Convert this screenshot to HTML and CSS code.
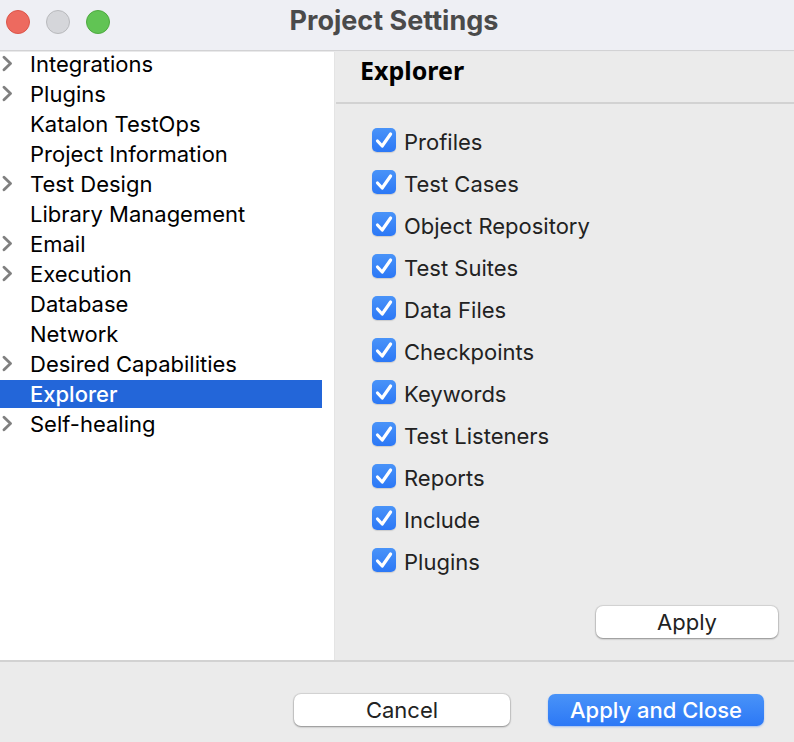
FILE: index.html
```
<!DOCTYPE html>
<html lang="en">
<head>
<meta charset="utf-8">
<meta name="viewport" content="width=device-width, initial-scale=1">
<title>Project Settings</title>
<link rel="stylesheet" href="styles.css">
</head>
<body>
<svg class="symbols" aria-hidden="true">
  <symbol id="chevron" viewBox="0 0 12 18"><path d="M4 2.200L10.500 8.500L4 14.800" fill="none" stroke="#808080" stroke-width="2.800" stroke-linecap="round" stroke-linejoin="round"/></symbol>
  <symbol id="check" viewBox="0 0 24 24"><path d="M5.500 13L10.200 18L18.600 6" fill="none" stroke="#fff" stroke-width="3.200" stroke-linecap="round" stroke-linejoin="round"/></symbol>
</svg>
<header class="titlebar">
  <div class="lights">
    <button class="light close" type="button" aria-label="Close"></button>
    <button class="light minimize" type="button" aria-label="Minimize" disabled></button>
    <button class="light zoom" type="button" aria-label="Zoom"></button>
  </div>
  <h1 class="title">Project Settings</h1>
</header>
<main class="main">
  <nav class="sidebar" aria-label="Settings">
    <ul class="tree">
      <li><a class="node" href="#"><svg class="chevron"><use href="#chevron"/></svg><span>Integrations</span></a></li>
      <li><a class="node" href="#"><svg class="chevron"><use href="#chevron"/></svg><span>Plugins</span></a></li>
      <li><a class="node leaf" href="#">Katalon TestOps</a></li>
      <li><a class="node leaf" href="#">Project Information</a></li>
      <li><a class="node" href="#"><svg class="chevron"><use href="#chevron"/></svg><span>Test Design</span></a></li>
      <li><a class="node leaf" href="#">Library Management</a></li>
      <li><a class="node" href="#"><svg class="chevron"><use href="#chevron"/></svg><span>Email</span></a></li>
      <li><a class="node" href="#"><svg class="chevron"><use href="#chevron"/></svg><span>Execution</span></a></li>
      <li><a class="node leaf" href="#">Database</a></li>
      <li><a class="node leaf" href="#">Network</a></li>
      <li><a class="node" href="#"><svg class="chevron"><use href="#chevron"/></svg><span>Desired Capabilities</span></a></li>
      <li><a class="node leaf selected" href="#" aria-current="page">Explorer</a></li>
      <li><a class="node" href="#"><svg class="chevron"><use href="#chevron"/></svg><span>Self-healing</span></a></li>
    </ul>
  </nav>
  <section class="pane">
    <h2 class="heading">Explorer</h2>
    <div class="options">
      <label class="option"><span class="tick"><input type="checkbox" checked><svg><use href="#check"/></svg></span><span>Profiles</span></label>
      <label class="option"><span class="tick"><input type="checkbox" checked><svg><use href="#check"/></svg></span><span>Test Cases</span></label>
      <label class="option"><span class="tick"><input type="checkbox" checked><svg><use href="#check"/></svg></span><span>Object Repository</span></label>
      <label class="option"><span class="tick"><input type="checkbox" checked><svg><use href="#check"/></svg></span><span>Test Suites</span></label>
      <label class="option"><span class="tick"><input type="checkbox" checked><svg><use href="#check"/></svg></span><span>Data Files</span></label>
      <label class="option"><span class="tick"><input type="checkbox" checked><svg><use href="#check"/></svg></span><span>Checkpoints</span></label>
      <label class="option"><span class="tick"><input type="checkbox" checked><svg><use href="#check"/></svg></span><span>Keywords</span></label>
      <label class="option"><span class="tick"><input type="checkbox" checked><svg><use href="#check"/></svg></span><span>Test Listeners</span></label>
      <label class="option"><span class="tick"><input type="checkbox" checked><svg><use href="#check"/></svg></span><span>Reports</span></label>
      <label class="option"><span class="tick"><input type="checkbox" checked><svg><use href="#check"/></svg></span><span>Include</span></label>
      <label class="option"><span class="tick"><input type="checkbox" checked><svg><use href="#check"/></svg></span><span>Plugins</span></label>
    </div>
    <div class="pane-actions"><button class="button apply" type="button">Apply</button></div>
  </section>
</main>
<footer class="footer">
  <button class="button" type="button">Cancel</button>
  <button class="button primary" type="button">Apply and Close</button>
</footer>
</body>
</html>
```
FILE: styles.css
```
* { box-sizing: border-box; }

body {
  display: flex;
  flex-direction: column;
  min-height: 100vh;
  margin: 0;
  background: #ebebeb;
  color: #222;
  font: 22px/28px Inter, "Liberation Sans", sans-serif;
}

.symbols { position: absolute; width: 0; height: 0; }

.titlebar {
  position: relative;
  display: grid;
  grid-template-columns: 1fr auto 1fr;
  align-items: start;
  height: 50px;
  padding: 8px 12px 0 6px;
  background: #eeeff4;
  box-shadow: 0 1px #d2d2d4, 0 2px #e9e9ea;
}

.lights { display: flex; gap: 16px; padding-top: 2px; }

.light {
  width: 24px;
  height: 24px;
  padding: 0;
  border: 1px solid;
  border-radius: 50%;
}

.close { background: #ed6a5f; border-color: #dc5549; }
.minimize { background: #d5d6da; border-color: #b9babd; }
.zoom { background: #61c454; border-color: #4eaa40; }

.title {
  margin: 0;
  color: #4a4a4a;
  font-size: 27px;
  font-weight: 700;
  line-height: 26px;
}

.main { display: flex; flex: 1; }

.sidebar { flex: 0 0 334px; background: #fff; }

.tree {
  display: grid;
  gap: 2px;
  margin: 0;
  padding: 0 12px 0 0;
  list-style: none;
}

.node {
  display: flex;
  align-items: center;
  gap: 18px;
  color: #000;
  text-decoration: none;
}

.leaf { padding-left: 30px; }
.selected { background: #2366d9; color: #fff; font-weight: 500; }
.chevron { width: 12px; height: 18px; }

.pane {
  display: flex;
  flex: 1;
  flex-direction: column;
  padding-left: 1px;
  border-left: 1px solid #e4e4e4;
}

.heading {
  margin: 0;
  padding: 6px 24px 18px;
  border-bottom: 2px solid #d2d2d2;
  color: #000;
  font: 700 25px/28px "Noto Sans", "Open Sans", sans-serif;
}

.options {
  display: grid;
  justify-items: start;
  gap: 14px;
  padding: 24px 36px;
}

.option { display: flex; gap: 8px; }

.tick { display: grid; width: 24px; height: 24px; }
.tick > * { grid-area: 1 / 1; }

.tick input {
  appearance: none;
  width: 24px;
  height: 24px;
  margin: 0;
  border-radius: 5px;
  background: #fff;
  box-shadow: 0 1px 1px #0002;
}

.tick input:checked { background: linear-gradient(#4993f8, #2c78f6); }
.tick svg { width: 24px; height: 24px; pointer-events: none; }
.tick input:not(:checked) + svg { visibility: hidden; }

.pane-actions {
  display: flex;
  justify-content: flex-end;
  margin-top: auto;
  padding: 0 16px 22px;
}

.button {
  width: 216px;
  height: 32px;
  padding: 0;
  border: 0;
  border-radius: 7px;
  background: #fff;
  box-shadow: 0 0 1px 1px #0000001a, 0 1px 2px #0005;
  color: #222;
  font: inherit;
}

.apply { width: 182px; }

.primary {
  background: linear-gradient(#4993f8, #2c78f6);
  box-shadow: 0 1px 2px #2c78f666;
  color: #fff;
  font-weight: 500;
}

.footer {
  display: flex;
  justify-content: flex-end;
  gap: 38px;
  padding: 32px 30px 16px;
  border-top: 2px solid #d2d2d2;
}
```
